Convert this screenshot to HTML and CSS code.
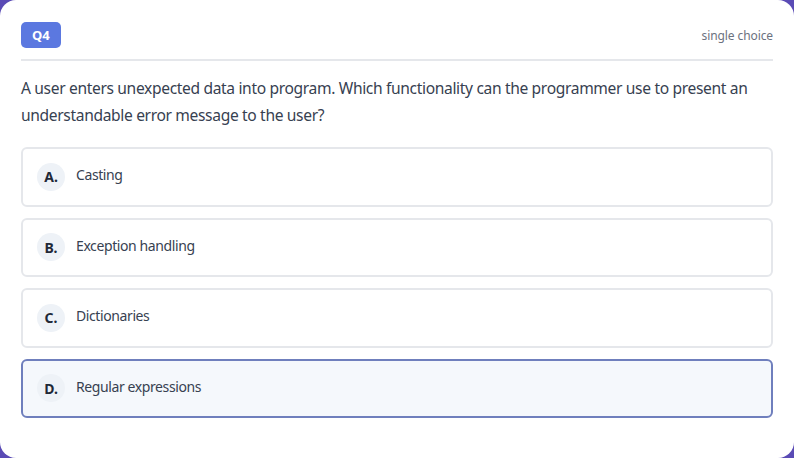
FILE: index.html
```html
<!DOCTYPE html>
<html lang="en">
<head>
    <meta charset="UTF-8">
    <meta name="viewport" content="width=device-width, initial-scale=1.0">
    <title>Quiz - Question 4</title>
    <link rel="stylesheet" href="styles.css">
</head>
<body>

    <div class="card">
        <!-- Header -->
        <div class="q-header">
            <span class="q-badge">Q4</span>
            <span class="q-type">single choice</span>
        </div>

        <p class="q-text">A user enters unexpected data into program. Which functionality can the programmer use to present an understandable error message to the user?</p>

        <!-- Options -->
        <div class="options">
            <div class="option">
                <span class="letter">A.</span>
                <span class="label">Casting</span>
            </div>
            <div class="option">
                <span class="letter">B.</span>
                <span class="label">Exception handling</span>
            </div>
            <div class="option">
                <span class="letter">C.</span>
                <span class="label">Dictionaries</span>
            </div>
            <div class="option selected">
                <span class="letter">D.</span>
                <span class="label">Regular expressions</span>
            </div>
        </div>
    </div>

</body>
</html>
```

FILE: styles.css
```css
body {
    font-family: "Noto Sans", "Open Sans", sans-serif;
    background-color: #5a4bb5;
    margin: 0;
    padding: 0;
}
.card {
    height: 458px;
    box-sizing: border-box;
    background-color: white;
    border-radius: 16px;
    padding: 22px 21px 0 21px;
}
.q-header {
    display: flex;
    justify-content: space-between;
    align-items: center;
    padding-bottom: 11px;
    border-bottom: 2px solid #e5e7eb;
}
.q-badge {
    background-color: #5b78e0;
    color: white;
    font-weight: bold;
    font-size: 13px;
    line-height: 26px;
    padding: 0 11px;
    border-radius: 5px;
}
.q-type {
    font-size: 12px;
    letter-spacing: -0.1px;
    color: #6b7280;
}
.q-text {
    font-size: 15.6px;
    letter-spacing: -0.35px;
    line-height: 27px;
    color: #374151;
    margin: 14px 0 18px 0;
}
.options {
    display: flex;
    flex-direction: column;
    gap: 11px;
}
.option {
    display: flex;
    align-items: center;
    gap: 11px;
    height: 59.5px;
    box-sizing: border-box;
    padding: 0 14px;
    border: 2px solid #e5e7eb;
    border-radius: 6px;
}
.option.selected {
    border-color: #6f7fbd;
    background-color: #f5f8fc;
}
.letter {
    display: flex;
    align-items: center;
    justify-content: center;
    width: 28px;
    height: 28px;
    border-radius: 50%;
    background-color: #eef2f7;
    color: #1f2937;
    font-weight: bold;
    font-size: 14px;
}
.label {
    font-size: 14px;
    letter-spacing: -0.4px;
    color: #374151;
    margin-top: -4px;
}
```
